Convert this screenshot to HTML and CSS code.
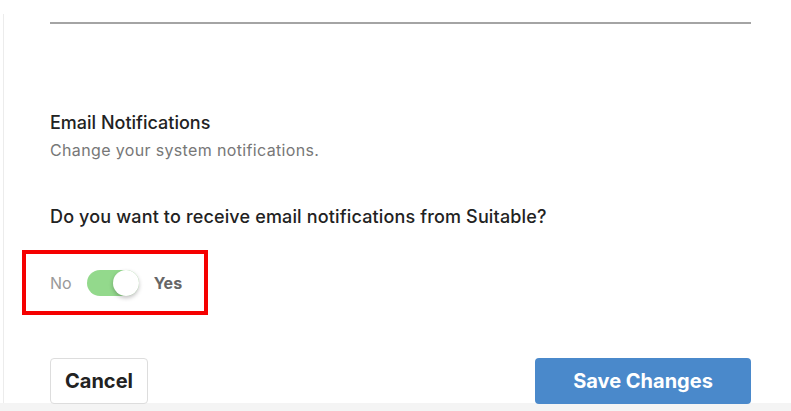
FILE: index.html
```html
<!DOCTYPE HTML>
<html>

<head>
    <meta charset="utf-8">
    <link rel="stylesheet" href="styles.css">
</head>

<body>
    <div class="panel">
        <div class="rule"></div>

        <div class="section">
            <h3 class="section-title">Email Notifications</h3>
            <p class="section-sub">Change your system notifications.</p>
        </div>

        <p class="question">Do you want to receive email notifications from Suitable?</p>

        <div class="highlight">
            <span class="label-no">No</span>
            <span class="switch on"><span class="knob"></span></span>
            <span class="label-yes">Yes</span>
        </div>

        <div class="actions">
            <a href="#" class="btn btn-cancel">Cancel</a>
            <a href="#" class="btn btn-save">Save Changes</a>
        </div>
    </div>
    <div class="footer"></div>
</body>

</html>
```

FILE: styles.css
```css
html, body {
    margin: 0;
    padding: 0;
    background: #fff;
    font-family: Inter, "Noto Sans", sans-serif;
    color: #222;
}
.panel {
    margin: 14px 0 0 3px;
    height: 389px;
    border-left: 1px solid #ececec;
    padding: 8px 0 0 46px;
    box-sizing: border-box;
}
.rule {
    width: 701px;
    height: 2px;
    background: #a4a4a4;
}
.section {
    margin-top: 88px;
}
.section-title {
    margin: 0;
    font-size: 18px;
    font-weight: 500;
    line-height: 22px;
    color: #222;
}
.section-sub {
    margin: 6px 0 0;
    font-size: 16px;
    letter-spacing: 0.35px;
    line-height: 20px;
    color: #777;
}
.question {
    margin: 45px 0 0;
    font-size: 18px;
    letter-spacing: 0.15px;
    line-height: 24px;
    font-weight: 500;
    color: #222;
}
.highlight {
    display: inline-flex;
    align-items: center;
    margin: 21px 0 0 -28px;
    padding: 0 22px 0 24px;
    height: 57px;
    border: 4px solid #f50000;
}
.label-no {
    font-size: 16px;
    color: #999;
}
.label-yes {
    font-size: 16px;
    font-weight: 700;
    color: #666;
    margin-left: 15px;
}
.switch {
    position: relative;
    flex-shrink: 0;
    margin-left: 15px;
    width: 52px;
    height: 26px;
    border-radius: 13px;
    background: #e0e0e0;
}
.switch.on {
    background: #93d98c;
}
.knob {
    position: absolute;
    top: 0;
    left: 0;
    width: 26px;
    height: 26px;
    border-radius: 50%;
    background: #fff;
    box-shadow: 0 2px 4px rgba(0, 0, 0, .25);
}
.switch.on .knob {
    left: 26px;
}
.actions {
    display: flex;
    justify-content: space-between;
    width: 701px;
    margin-top: 43px;
}
.btn {
    display: flex;
    align-items: center;
    justify-content: center;
    height: 46px;
    box-sizing: border-box;
    border-radius: 4px;
    font-size: 20px;
    font-weight: 700;
    text-decoration: none;
}
.btn-cancel {
    width: 98px;
    border: 1px solid #ddd;
    color: #222;
}
.btn-save {
    width: 216px;
    background: #4a89cb;
    color: #fff;
}
.footer {
    height: 8px;
    background: #f4f4f4;
}
```
